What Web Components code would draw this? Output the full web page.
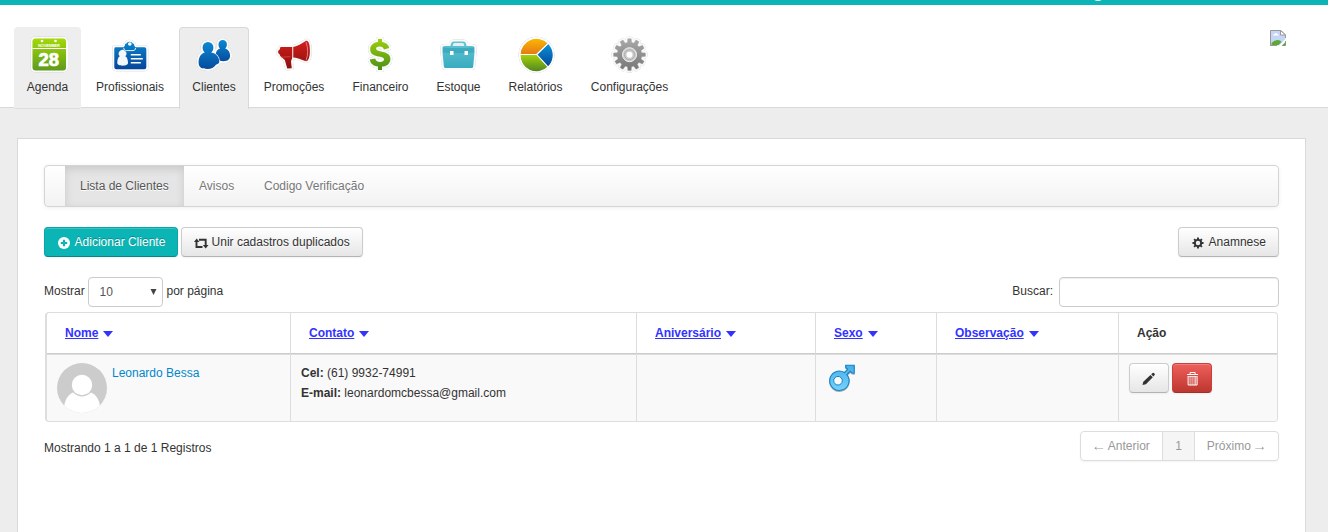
<!DOCTYPE html>
<html lang="pt-BR">
<head>
<meta charset="utf-8">
<title>Lista de Clientes</title>
<style>
html,body{margin:0;height:100%;overflow:hidden;background:#ededed}
body{font:12px/20px "Liberation Sans",Arial,sans-serif;color:#333}
</style>
</head>
<body>
<clientes-page></clientes-page>
<script>
const define=(name,html)=>customElements.define(name,class extends HTMLElement{
  constructor(){super();this.attachShadow({mode:'open'}).innerHTML=typeof html==='function'?html(this):html;}
});

const gearPath=(n,cx,cy,ro,ri)=>{
  let d='';
  for(let i=0;i<n;i++){
    const a=i*2*Math.PI/n,s=2*Math.PI/n;
    [[-.32,ri],[-.2,ro],[.2,ro],[.32,ri]].forEach(([k,r])=>{
      d+=(d?'L':'M')+(cx+r*Math.sin(a+k*s)).toFixed(2)+' '+(cy-r*Math.cos(a+k*s)).toFixed(2);
    });
  }
  return d+'Z';
};
const grad=(id,a,b)=>`<linearGradient id="${id}" x1="0" y1="0" x2="0" y2="1"><stop offset="0" stop-color="${a}"/><stop offset="1" stop-color="${b}"/></linearGradient>`;
const sticker=body=>`<g fill="#fafafa" stroke="#fafafa" stroke-width="4" stroke-linejoin="round" class="halo">${body}</g>`;
const ART={
  agenda:()=>`<defs>${grad('g','#a4d907','#5f9a1d')}</defs>${sticker('<rect x="4.500" y="2.500" width="33.500" height="32" rx="3"/>')}
    <rect x="4.500" y="2.500" width="33.500" height="32" rx="3" fill="url(#g)"/><path d="M4.500 12.500h33.500" stroke="#fff" stroke-width="1"/>
    <circle cx="14" cy="5" r="1.300" fill="#fff"/><circle cx="27.500" cy="5" r="1.300" fill="#fff"/>
    <text x="21" y="10.500" text-anchor="middle" font-size="4" font-weight="700" fill="#fff" textLength="22">NOVEMBER</text>
    <text x="20.800" y="30" text-anchor="middle" font-size="18.500" font-weight="700" fill="#fff" stroke="#fff" stroke-width=".7" textLength="20.500" lengthAdjust="spacingAndGlyphs">28</text>`,
  profissionais:()=>{const s='<path d="M5 12h9.500q1-1 1.500-3.500h.8a4 4 0 0 1 7 0h.7q.5 2.500 1.500 3.500H35q2 0 2 2v18q0 2-2 2H7q-2 0-2-2V14q0-2 1-2Z"/>';
    return `<defs>${grad('g','#0b84cd','#06459a')}</defs><g transform="translate(-.7 -.7)">${sticker(s)}<g fill="url(#g)">${s}</g><path d="M14.500 12.700c0 1.800 1.200 2.600 2.600 2.600h6.600c1.500 0 2.500-.8 2.500-2.600" fill="none" stroke="#fff" stroke-width=".9"/>
    <circle cx="20.500" cy="8.700" r="1.800" fill="#fff"/><path d="M10.500 21a3.800 3.800 0 1 1 5.500 0c2 .8 2.700 4 2.700 6.800 0 3.500-10.700 3.500-10.700 0 0-2.800.6-6 2.500-6.800Z" fill="#f4f7fa"/>
    <path d="M21.500 19.500h10M21.500 23.500h12M21.500 27.500h10" stroke="#fff" stroke-width="1.400"/></g>`},
  clientes:()=>{const back='<path d="M24.500 8.200a4.200 4.200 0 1 1 8.400 0c0 2-.7 3.400-1.700 4.300 3 .9 4.900 3.700 4.900 7 0 4-2.500 5.700-6.500 5.700-5 0-8-2-8-5.700 0-3.300 1.500-6.100 4.400-7-1-1-1.500-2.300-1.500-4.300Z"/>';
    const front='<path d="M8.600 11.500a5.400 5.500 0 1 1 10.800 0c0 2.200-.8 3.900-2.200 5 4.800.7 8.300 4.800 8.100 9.500-.1 1.800-2 1.800-3.600 3-2 2.800-4.200 3.900-8.200 3.900-5.500 0-8.900-1.200-8.900-6.400 0-5.500 2.400-8.900 6.200-10-1.400-1.100-2.200-2.800-2.200-5Z"/>';
    return `<defs>${grad('g','#0b89d2','#064c9e')}</defs>${sticker(back+front)}<g fill="url(#g)">${back}</g><g fill="#fafafa" stroke="#fafafa" stroke-width="1.400">${front}</g><g fill="url(#g)">${front}</g>`},
  promocoes:()=>{const s='<path d="M2.500 15.500q0-1.700 1.500-2l1-3h12c5 0 10-4 14-6.300 3-.4 4 4.500 4 10.500s-1.500 10.500-4 10.500c-5-2-9-4-14-4l-.5 2-.8 2 .8 7-4.600.3-2.500-8.500L5 20l-1-2q-1.500-.5-1.500-2.500Z"/>';
    return `<defs>${grad('g','#d41e1c','#8a100d')}</defs><g transform="translate(1.600 .6) scale(.98)">${sticker(s)}<g fill="url(#g)">${s}</g><path d="M17.500 10v12" stroke="#fff" stroke-width="1"/><path d="M31 5.500q3.500 9.500 0 19" fill="none" stroke="#e99" stroke-width=".8"/><path d="m6 21 9-.5" stroke="#e44" stroke-width=".8"/></g>`},
  financeiro:()=>{const s='<path d="M18 2.500h4v3.200c3.700.5 6.500 2.400 7.200 6l-5.200 1.500c-.6-2-2-3-4.200-3-2.300 0-3.700.9-3.700 2.200 0 1.800 2.300 2.100 5 2.700 4.600 1 9.300 2.400 9.300 7.400 0 4.600-3.500 7.200-8.400 7.700v3.300h-4v-3.300c-4.700-.5-7.600-2.900-8.200-7l5.400-1c.5 2.200 2 3.500 4.800 3.500 2.500 0 4-.9 4-2.500 0-1.900-2-2.300-5-3-4.600-1.100-8.800-2.300-8.800-7.200 0-4 3-6.700 7.800-7.300Z"/>';
    return `<defs>${grad('g','#9bd00b','#4b8f18')}</defs><g transform="translate(-1 .4)">${sticker(s)}<g fill="url(#g)">${s}</g></g>`},
  estoque:()=>{const s='<path d="M12 9.500q.5-4.500 3-4.500h10q2.500 0 3 4.500h5q3 0 3 1.500v5l-1.300 14q-.1 1.500-1.600 1.500H7q-1.500 0-1.600-1.500L4 16v-5q0-1.500 2-1.500Z"/>';
    return `<defs>${grad('g','#62c4d5','#38acbf')}</defs><g transform="translate(-.5 .4)">${sticker(s)}<g fill="url(#g)">${s}</g><path d="M14.200 9.500c0-2 .6-3 2-3h7.600c1.400 0 2 1 2 3" fill="#e3eff2"/><path d="M4.500 16q15.500 1 31 0v-5q-15.500 1-31 0Z" fill="#319fb5" opacity=".6"/><path d="M11.500 14.500h3.500v4h-3.500ZM26 14.500h3.500v4H26Z" fill="#fff"/></g>`},
  relatorios:()=>`<defs>${grad('y','#fbb900','#e67817')}${grad('g','#a8d407','#4e8425')}${grad('b','#0895dc','#064493')}</defs>${sticker('<circle cx="20.500" cy="18.700" r="16"/>')}
    <g stroke="#fff" stroke-width="1.100" stroke-linejoin="round"><path d="M20.800 18.500H4a16.500 16.500 0 0 1 28.300-11.200Z" fill="url(#y)"/><path d="M20.800 18.500 32.200 31A16.500 16.500 0 0 1 4 18.500Z" fill="url(#g)"/><path d="M20.800 18.500 32.300 7.300A16.500 16.500 0 0 1 32.200 31Z" fill="url(#b)"/></g>`,
  configuracoes:()=>{const s=`<path d="${gearPath(12,20,18.7,16,12.3)}"/>`;
    return `<defs>${grad('g','#a9a9a9','#777')}</defs><g transform="translate(-.5 0)">${sticker(s)}<g fill="url(#g)" stroke="#999" stroke-width=".4" stroke-linejoin="round">${s}</g><circle cx="20" cy="18.700" r="7" fill="#ccc" stroke="#f0f0f0"/><circle cx="20" cy="18.700" r="5" fill="none" stroke="#aaa" stroke-width=".9"/><circle cx="20" cy="18.700" r="3" fill="#fff"/></g>`}
};
define('nav-art',el=>`<style>:host{display:block;width:40px;height:40px;margin:0 auto}svg{display:block;overflow:visible;font-family:"Liberation Sans",Arial,sans-serif}.halo{filter:drop-shadow(0 .7px .6px rgba(0,0,0,.28))}</style><svg width="40" height="40" viewBox="0 0 40 40">${ART[el.getAttribute('name')]()}</svg>`);

define('nav-tab',el=>`<style>
:host{display:block;box-sizing:border-box;height:82px;width:var(--w);margin-right:2px;padding-top:8px;border:1px solid transparent;border-bottom:0;border-radius:4px 4px 0 0;text-align:center;white-space:nowrap;flex:none}
:host([hover]){background:#eee;border-color:#eee;border-bottom:1px solid #ddd}
:host([active]){background:#ededed;border-color:#d9d9d9}
span{display:block;margin-top:1px}</style><nav-art name="${el.getAttribute('art')}"></nav-art><span><slot></slot></span>`);

define('app-header',`<style>
:host{display:flex;box-sizing:border-box;height:108px;background:#fff;border-top:5px solid #0bb5b5;border-bottom:1px solid #d9d9d9;padding:22px 42px 0 14px;justify-content:space-between;align-items:flex-start;position:relative}
nav{display:flex}.avatar{position:absolute;left:1091px;top:-17px}.broken{margin-top:3px;display:block}</style>
<nav>
<nav-tab hover art="agenda" style="--w:67px">Agenda</nav-tab>
<nav-tab art="profissionais" style="--w:94px">Profissionais</nav-tab>
<nav-tab active art="clientes" style="--w:70px">Clientes</nav-tab>
<nav-tab art="promocoes" style="--w:86px">Promoções</nav-tab>
<nav-tab art="financeiro" style="--w:83px">Financeiro</nav-tab>
<nav-tab art="estoque" style="--w:69px">Estoque</nav-tab>
<nav-tab art="relatorios" style="--w:81px">Relatórios</nav-tab>
<nav-tab art="configuracoes" style="--w:103px">Configurações</nav-tab>
</nav>
<svg class="avatar" width="14" height="13"><circle cx="7" cy="6" r="7" fill="#fff"/></svg>
<svg class="broken" width="16" height="16"><path d="M.5.500h10l5 5V9L9 15.500H.5Z" fill="#c5d5f5"/><path d="M3 5.500q0-1.500 1.500-1.500Q6 2 7.300 4q1.500 0 1.500 1.500Z" fill="#fff"/><path d="M1.500 15v-2q3-3 6-3t4 2l-3 3Z" fill="#5aaa35"/><path d="M.5 16V.5H11L15.500 5v3M0 15.500h7M12 15.500h3.500V11" fill="none" stroke="#999"/><path d="M10.500.500v4.500h5Z" fill="#fff" stroke="#999"/><path d="M12 15.500 15.500 12v3.500Z" fill="#5aaa35"/></svg>`);

define('sub-nav',`<style>
:host{display:flex;box-sizing:border-box;height:42px;border:1px solid #d4d4d4;border-radius:4px;background:linear-gradient(#fff,#f2f2f2);box-shadow:0 1px 4px rgba(0,0,0,.065);padding-left:20px;color:#777;text-shadow:0 1px 0 #fff}
span{padding:10px 0 10px 15px;box-sizing:border-box;white-space:nowrap}
.on{width:119px;background:#e5e5e5;color:#555;box-shadow:inset 0 3px 8px rgba(0,0,0,.125)}.av{width:65px}</style>
<span class="on">Lista de Clientes</span><span class="av">Avisos</span><span>Codigo Verificação</span>`);

const GLYPH={
  plus:'<circle cx="7" cy="7" r="6" fill="#fff"/><path d="M7 3.800v6.400M3.800 7h6.400" stroke="#0bb5b5" stroke-width="2.200"/>',
  retweet:'<path d="M2.500 4.500V11H8.500M5 3.800h6.700V10" fill="none" stroke="#333" stroke-width="1.900"/><path d="M0 6 2.700 2.500 5.500 6ZM8.800 9l2.900 3.500L14.500 9Z" fill="#333"/>',
  gear:`<path fill-rule="evenodd" d="${gearPath(8,7,7,5.600,4.200)}M9.200 7A2.200 2.200 0 1 0 4.800 7 2.200 2.200 0 1 0 9.200 7Z" fill="#333"/>`,
  pencil:'<path d="m.5 13 .8-3.200L8.500 3l2.300 2.300-6.900 6.900ZM9.200 2.300 10.600 1q.7-.5 1.200 0l.8.800q.6.600 0 1.200l-1.200 1.500Z" fill="#333"/>',
  trash:'<g transform="translate(.6 0)"><path d="M4.500 2.500v-2h5v2M1.500 2.500h11M2.500 4.500v8.500h9V4.500" fill="none" stroke="#fff" stroke-width="1"/><path d="M2 4.500h10M4.500 4v9M6.500 4v9M8.500 4v9M10 4v9" stroke="#fff" stroke-width=".7"/></g>'
};
define('ui-button',el=>`<style>
:host{display:flex;box-sizing:border-box;width:var(--w);height:30px;border:1px solid #ccc;border-bottom-color:#b3b3b3;border-radius:4px;background:linear-gradient(#fff,#e6e6e6);box-shadow:inset 0 1px 0 rgba(255,255,255,.2),0 1px 2px rgba(0,0,0,.05);padding:4px 0 0 12px;white-space:nowrap;text-shadow:0 1px 1px rgba(255,255,255,.75)}
:host([kind=primary]){background:#0bb5b5;border-color:#0aa5a5 #0aa5a5 #078686;color:#fff;text-shadow:0 -1px 0 rgba(0,0,0,.25)}
:host([kind=danger]){background:linear-gradient(#ee5f5b,#bd362f);border-color:#c9403a #c9403a #a52d27}
svg{margin:4px 3.600px 0 0;flex:none;overflow:visible}</style><svg width="14" height="14">${GLYPH[el.getAttribute('icon')]}</svg><slot></slot>`);

define('action-bar',`<style>:host{display:flex;gap:3px;margin-top:20px}.end{margin-left:auto}</style>
<ui-button kind="primary" icon="plus" style="--w:134px">Adicionar Cliente</ui-button>
<ui-button icon="retweet" style="--w:182px">Unir cadastros duplicados</ui-button>
<ui-button class="end" icon="gear" style="--w:101px"><span>Anamnese</span></ui-button>`);

define('table-filter',`<style>:host{display:flex;height:30px;margin-top:20px;line-height:28px}
.sel{box-sizing:border-box;width:75px;height:30px;margin:0 3.500px 0 3px;border:1px solid #ccc;border-radius:4px;padding:0 5.500px 0 10.500px;display:flex;justify-content:space-between;align-items:center;color:#555}
.m{width:41px}.b{margin-left:auto;margin-right:6px}.in{box-sizing:border-box;width:220px;height:30px;border:1px solid #ccc;border-radius:4px;box-shadow:inset 0 1px 1px rgba(0,0,0,.075)}</style>
<span class="m">Mostrar</span><div class="sel"><span>10</span><svg width="7" height="6"><path d="M.5 0h6L3.500 6Z" fill="#444"/></svg></div><span>por página</span><span class="b">Buscar:</span><div class="in"></div>`);

define('sort-head',`<style>:host{display:flex;align-items:center;color:#33f;font-weight:700}span{text-decoration:underline}svg{margin:1px 0 0 5px}</style><span><slot></slot></span><svg width="10" height="6"><path d="M0 0h10L5 6Z" fill="#33f"/></svg>`);

define('client-table',`<style>
:host{display:grid;box-sizing:border-box;width:1233px;height:110px;margin:5px 0 0 1px;grid-template:41px 1fr/243px 346px 179px 121px 182px 1fr;border:1px solid #ddd;border-left-width:2px;border-radius:4px;overflow:hidden}
.h,.c{border-left:1px solid #ddd;box-sizing:border-box}.h:nth-child(6n+2),.c.first{border-left:0}
.h{padding:10px 0 0 18px;border-bottom:1px solid #ccc;font-weight:700}
.c{background:#f9f9f9;border-top:1px solid #ddd;padding:8px 10px;white-space:nowrap}
.first{display:flex;gap:5px}.name{color:#08c}.acts{display:flex;gap:3px}</style>
<div class="h"><sort-head>Nome</sort-head></div><div class="h"><sort-head>Contato</sort-head></div><div class="h"><sort-head>Aniversário</sort-head></div><div class="h"><sort-head>Sexo</sort-head></div><div class="h"><sort-head>Observação</sort-head></div><div class="h">Ação</div>
<div class="c first"><svg width="50" height="50"><defs><clipPath id="c"><circle cx="25" cy="25" r="25"/></clipPath></defs><g clip-path="url(#c)"><path d="M0 0h50v50H0Z" fill="#ccc"/><path d="M7 50v-6c1-8 5-13 9-14.500q9 8 18 0c5 2 8.500 7 9 14.500v6Z" fill="#fff"/></g><circle cx="25" cy="22" r="10.200" fill="#fff"/></svg><span class="name">Leonardo Bessa</span></div>
<div class="c"><b>Cel:</b> (61) 9932-74991<br><b>E-mail:</b> leonardomcbessa@gmail.com</div><div class="c"></div>
<div class="c"><svg width="32" height="32" style="overflow:visible"><defs><linearGradient id="m" x1="0" y1="0" x2="0" y2="1"><stop stop-color="#45aeea"/><stop offset="1" stop-color="#76d3fb"/></linearGradient></defs><g transform="translate(1 1.500)" style="filter:drop-shadow(0 1px .7px #aaa)"><path d="m17.500 8 3.200-3.200-2-2V.7h8.500v8l-2-.2-2-1.700-3.300 3.300A9.700 9.700 0 1 1 17.500 8Z" fill="url(#m)" stroke="#1684c8" stroke-width="1.100"/><circle cx="11" cy="16.200" r="4.300" fill="#f9f9f9" stroke="#1684c8"/></g></svg></div>
<div class="c"></div><div class="c acts"><ui-button icon="pencil" style="--w:40px"></ui-button><ui-button kind="danger" icon="trash" style="--w:40px"></ui-button></div>`);

define('table-footer',`<style>:host{display:flex;justify-content:space-between;margin-top:9px}
.info{padding-top:7px}.pg{display:grid;box-sizing:border-box;width:199px;height:30px;grid-template-columns:81px 32px 1fr;border:1px solid #ddd;border-radius:4px;color:#999;line-height:28px;box-shadow:0 1px 2px rgba(0,0,0,.05);overflow:hidden;white-space:nowrap;text-align:center}
.pg span+span{border-left:1px solid #ddd}.n{background:#f5f5f5}i{display:inline-block;font-style:normal;transform:scaleX(1.25)}</style>
<span class="info">Mostrando 1 a 1 de 1 Registros</span><div class="pg"><span><i>←</i> Anterior</span><span class="n">1</span><span>Próximo <i>→</i></span></div>`);

define('clientes-page',`<style>:host{display:block}
main{box-sizing:border-box;width:1289px;height:394px;margin:30px 0 0 17px;background:#fff;border:1px solid #d9d9d9;border-bottom:0;padding:26px}</style>
<app-header></app-header><main><sub-nav></sub-nav><action-bar></action-bar><table-filter></table-filter><client-table></client-table><table-footer></table-footer></main>`);
</script>
</body>
</html>
